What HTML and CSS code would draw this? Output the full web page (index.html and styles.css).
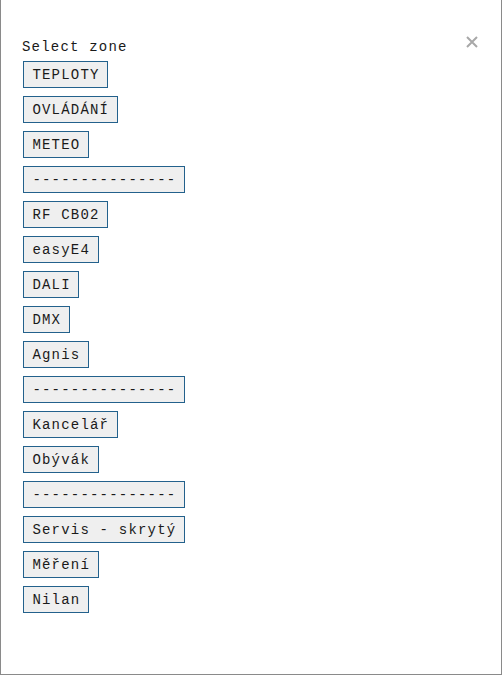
FILE: index.html
```html
<!DOCTYPE html>
<html>
<head>
<meta charset="utf-8">
<link rel="stylesheet" href="styles.css">
</head>
<body>
<div class="dialog">
  <button class="close" aria-label="Close">
    <svg width="12" height="12" viewBox="0 0 12 12"><path d="M1 1L11 11M11 1L1 11" stroke="#a8a8a8" stroke-width="2" fill="none"/></svg>
  </button>
  <div class="title">Select zone</div>
  <div class="list">
    <button class="zone">TEPLOTY</button>
    <button class="zone">OVLÁDÁNÍ</button>
    <button class="zone">METEO</button>
    <button class="zone">---------------</button>
    <button class="zone">RF CB02</button>
    <button class="zone">easyE4</button>
    <button class="zone">DALI</button>
    <button class="zone">DMX</button>
    <button class="zone">Agnis</button>
    <button class="zone">---------------</button>
    <button class="zone">Kancelář</button>
    <button class="zone">Obývák</button>
    <button class="zone">---------------</button>
    <button class="zone">Servis - skrytý</button>
    <button class="zone">Měření</button>
    <button class="zone">Nilan</button>
  </div>
</div>
</body>
</html>
```
FILE: styles.css
```css
html, body {
  margin: 0;
  padding: 0;
  background: #ffffff;
}
.dialog {
  position: relative;
  box-sizing: border-box;
  width: 502px;
  height: 675px;
  border: 1px solid #8a8a8a;
  border-top: none;
  padding: 38px 0 0 21px;
  font-family: "Liberation Mono", monospace;
  font-size: 14px;
  letter-spacing: 1.2px;
  color: #1a1a1a;
}
.close {
  position: absolute;
  top: 35px;
  right: 22px;
  width: 14px;
  height: 14px;
  padding: 0;
  margin: 0;
  border: none;
  background: none;
  display: flex;
  align-items: center;
  justify-content: center;
}
.title {
  line-height: 18px;
  margin-bottom: 5px;
}
.list {
  display: flex;
  flex-direction: column;
  align-items: flex-start;
  gap: 8px;
  padding-left: 1px;
}
.zone {
  font-family: "Liberation Mono", monospace;
  font-size: 14px;
  letter-spacing: 1.2px;
  line-height: 18px;
  height: 27px;
  padding: 0 7.6px 0 8.4px;
  margin: 0;
  border: 1px solid #23618c;
  background: #efefef;
  color: #1a1a1a;
  white-space: pre;
  box-sizing: border-box;
}
```
